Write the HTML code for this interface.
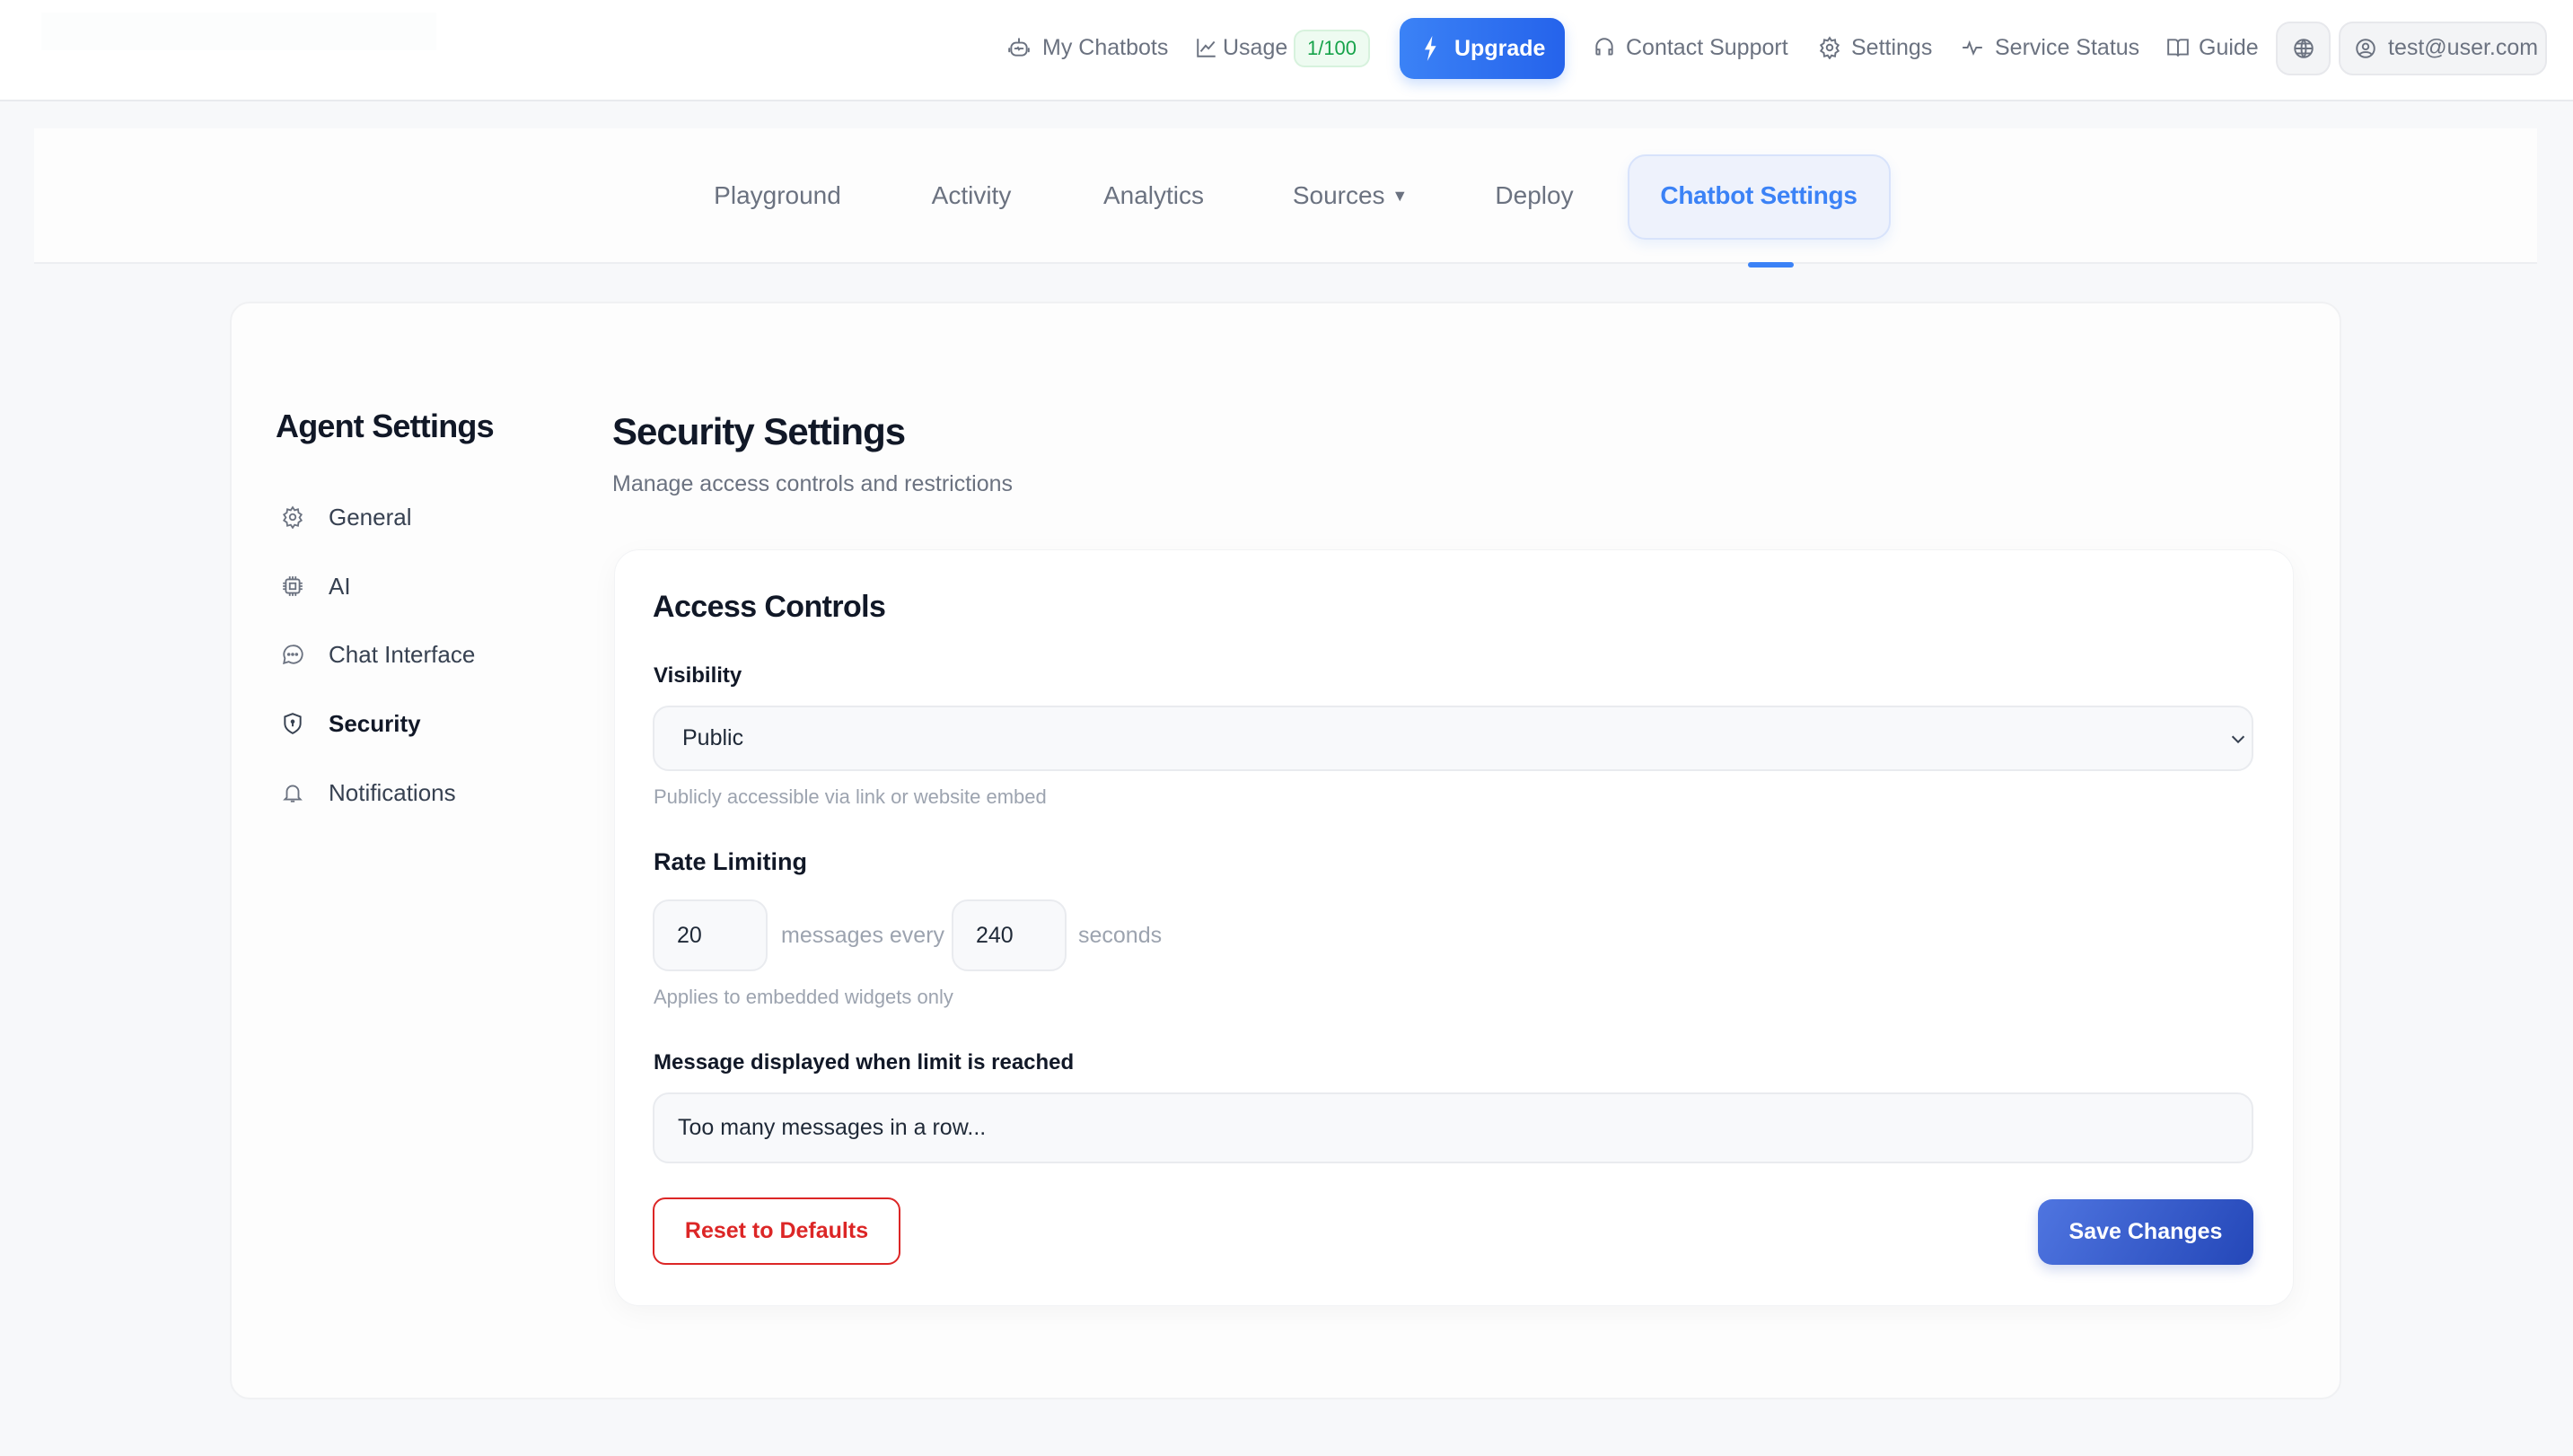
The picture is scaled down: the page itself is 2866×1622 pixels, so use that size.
<!DOCTYPE html>
<html><head><meta charset="utf-8"><style>
*{margin:0;padding:0;box-sizing:border-box}
body{width:2866px;height:1622px;background:#f7f8fa;font-family:"Liberation Sans",sans-serif;position:relative;overflow:hidden;color:#111827}
.a{position:absolute;white-space:nowrap}
.hdr{position:absolute;left:0;top:0;width:2866px;height:113px;background:#fff;border-bottom:2px solid #e8eaee}
.hi{position:absolute;top:36px;height:34px;line-height:34px;font-size:25px;color:#6b7280}
svg{display:block}
.tab{position:absolute;top:198px;height:40px;line-height:40px;font-size:28px;color:#6b7280;transform:translateX(-50%)}
.side{position:absolute;left:366px;font-size:26px;color:#374151;height:36px;line-height:36px}
.sic{position:absolute;left:313px;width:26px;height:26px}
.inp{position:absolute;background:#f8f9fb;border:2px solid #e9ebef;border-radius:18px}
.help{position:absolute;left:728px;font-size:22px;color:#9ca3af;height:30px;line-height:30px}
.lbl{position:absolute;left:728px;font-size:24px;font-weight:bold;color:#111827;height:32px;line-height:32px}
</style></head><body>
<div class="hdr"></div>
<div class="a" style="left:46px;top:14px;width:440px;height:42px;background:#fcfdfd"></div>

<!-- header items -->
<svg class="a" style="left:1122px;top:40px" width="26" height="26" viewBox="0 0 24 24" fill="none" stroke="#6b7280" stroke-width="1.8" stroke-linecap="round"><rect x="4" y="7" width="16" height="13" rx="5"/><path d="M12 3v4M2 13v3M22 13v3M8 13h2l1-1 1 2 1-1h3"/></svg>
<div class="hi" style="left:1161px">My Chatbots</div>
<svg class="a" style="left:1331px;top:40px" width="26" height="26" viewBox="0 0 24 24" fill="none" stroke="#6b7280" stroke-width="1.8"><path d="M3 3v18h18M6 16l5-6 3 3 6-7"/></svg>
<div class="hi" style="left:1362px">Usage</div>
<div class="a" style="left:1441px;top:33px;width:85px;height:42px;border-radius:12px;background:#eefbf1;border:2px solid #d7f2dd;color:#16a34a;font-size:22px;line-height:38px;text-align:center">1/100</div>
<div class="a" style="left:1559px;top:20px;width:184px;height:68px;border-radius:16px;background:linear-gradient(90deg,#3b82f6,#2563eb);box-shadow:0 6px 14px rgba(59,130,246,.25);color:#fff;font-size:25px;font-weight:bold;line-height:68px">
<svg class="a" style="left:26px;top:20px" width="18" height="28" viewBox="0 0 12 20"><path d="M7 0L1 11h4l-2 9 7-12H6z" fill="#fff"/></svg><span style="position:absolute;left:61px">Upgrade</span></div>
<svg class="a" style="left:1774px;top:40px" width="26" height="26" viewBox="0 0 24 24" fill="none" stroke="#6b7280" stroke-width="1.8"><path d="M4 14v-3a8 8 0 0116 0v3M4 14h3v5H5a1 1 0 01-1-1zM20 14h-3v5h2a1 1 0 001-1z"/></svg>
<div class="hi" style="left:1811px">Contact Support</div>
<svg class="a" style="left:2025px;top:40px" width="26" height="26" viewBox="0 0 24 24" fill="none" stroke="#6b7280" stroke-width="1.8"><circle cx="12" cy="12" r="3"/><path d="M12 2l2 3 3.5-1 .5 3.5 3 2-2 3 2 3-3 2-.5 3.5-3.5-1-2 3-2-3-3.5 1-.5-3.5-3-2 2-3-2-3 3-2 .5-3.5 3.5 1z"/></svg>
<div class="hi" style="left:2062px">Settings</div>
<svg class="a" style="left:2184px;top:40px" width="26" height="26" viewBox="0 0 24 24" fill="none" stroke="#6b7280" stroke-width="1.8"><path d="M2 12h5l2-5 4 11 3-6h6"/></svg>
<div class="hi" style="left:2222px">Service Status</div>
<svg class="a" style="left:2413px;top:40px" width="26" height="26" viewBox="0 0 24 24" fill="none" stroke="#6b7280" stroke-width="1.8"><path d="M2 4h7a3 3 0 013 3v14a2 2 0 00-2-2H2zM22 4h-7a3 3 0 00-3 3v14a2 2 0 012-2h8z"/></svg>
<div class="hi" style="left:2449px">Guide</div>
<div class="a" style="left:2535px;top:24px;width:61px;height:60px;border-radius:16px;background:#f3f4f6;border:2px solid #e7e8ec"></div>
<svg class="a" style="left:2553px;top:41px" width="26" height="26" viewBox="0 0 24 24" fill="none" stroke="#6b7280" stroke-width="1.8"><circle cx="12" cy="12" r="9"/><path d="M3 12h18M12 3c3 3 3 15 0 18M12 3c-3 3-3 15 0 18M5 7h14M5 17h14"/></svg>
<div class="a" style="left:2605px;top:24px;width:232px;height:60px;border-radius:16px;background:#f3f4f6;border:2px solid #e7e8ec"></div>
<svg class="a" style="left:2622px;top:41px" width="26" height="26" viewBox="0 0 24 24" fill="none" stroke="#6b7280" stroke-width="1.8"><circle cx="12" cy="12" r="9"/><circle cx="12" cy="10" r="3"/><path d="M6 18c2-3 10-3 12 0"/></svg>
<div class="hi" style="left:2660px">test@user.com</div>

<!-- tab bar -->
<div class="a" style="left:38px;top:143px;width:2788px;height:151px;background:#fdfdfd;border-bottom:2px solid #eceef1"></div>
<div class="tab" style="left:866px">Playground</div>
<div class="tab" style="left:1082px">Activity</div>
<div class="tab" style="left:1285px">Analytics</div>
<div class="tab" style="left:1504px">Sources <span style="font-size:18px;vertical-align:3px">▼</span></div>
<div class="tab" style="left:1709px">Deploy</div>
<div class="a" style="left:1813px;top:172px;width:293px;height:95px;border-radius:20px;background:#eef2fc;border:2px solid #d8e3fb;box-shadow:0 6px 14px rgba(59,130,246,.1)"></div>
<div class="tab" style="left:1959px;color:#3b82f6;font-weight:bold;letter-spacing:-0.3px">Chatbot Settings</div>
<div class="a" style="left:1947px;top:292px;width:51px;height:6px;border-radius:3px;background:#3b82f6"></div>

<!-- main card -->
<div class="a" style="left:256px;top:336px;width:2352px;height:1223px;background:#fdfdfd;border:2px solid #f0f1f3;border-radius:22px"></div>
<div class="a" style="left:307px;top:454px;font-size:36px;font-weight:bold;letter-spacing:-0.8px;color:#111827;line-height:42px">Agent Settings</div>

<svg class="sic" style="top:563px" viewBox="0 0 24 24" fill="none" stroke="#6b7280" stroke-width="1.7"><circle cx="12" cy="12" r="3"/><path d="M12 2l2 3 3.5-1 .5 3.5 3 2-2 3 2 3-3 2-.5 3.5-3.5-1-2 3-2-3-3.5 1-.5-3.5-3-2 2-3-2-3 3-2 .5-3.5 3.5 1z"/></svg>
<div class="side" style="top:558px">General</div>
<svg class="sic" style="top:640px" viewBox="0 0 24 24" fill="none" stroke="#6b7280" stroke-width="1.7"><rect x="5" y="5" width="14" height="14" rx="2"/><rect x="9" y="9" width="6" height="6"/><path d="M9 2v3M12 2v3M15 2v3M9 19v3M12 19v3M15 19v3M2 9h3M2 12h3M2 15h3M19 9h3M19 12h3M19 15h3"/></svg>
<div class="side" style="top:635px">AI</div>
<svg class="sic" style="top:716px" viewBox="0 0 24 24" fill="none" stroke="#6b7280" stroke-width="1.7"><path d="M12 3a9 9 0 00-8 13l-1 5 5-1.5A9 9 0 1012 3z"/><circle cx="8" cy="12" r=".8" fill="#6b7280"/><circle cx="12" cy="12" r=".8" fill="#6b7280"/><circle cx="16" cy="12" r=".8" fill="#6b7280"/></svg>
<div class="side" style="top:711px">Chat Interface</div>
<svg class="sic" style="top:793px" viewBox="0 0 24 24" fill="none" stroke="#374151" stroke-width="1.8"><path d="M12 2l8 3v7c0 5-4 8-8 10-4-2-8-5-8-10V5z"/><circle cx="12" cy="10" r="1.2" fill="#374151"/><path d="M12 11v4"/></svg>
<div class="side" style="top:788px;color:#111827;font-weight:bold">Security</div>
<svg class="sic" style="top:870px" viewBox="0 0 24 24" fill="none" stroke="#6b7280" stroke-width="1.7"><path d="M6 17V11a6 6 0 0112 0v6l2 2H4zM10 21h4"/></svg>
<div class="side" style="top:865px">Notifications</div>

<div class="a" style="left:682px;top:456px;font-size:42px;font-weight:bold;letter-spacing:-1px;color:#111827;line-height:50px">Security Settings</div>
<div class="a" style="left:682px;top:524px;font-size:25px;color:#6b7280;line-height:30px">Manage access controls and restrictions</div>

<!-- inner card -->
<div class="a" style="left:684px;top:612px;width:1871px;height:843px;background:#fff;border-radius:28px;border:1px solid #f2f3f5;box-shadow:0 8px 30px rgba(0,0,0,.04)"></div>
<div class="a" style="left:727px;top:656px;font-size:34px;font-weight:bold;letter-spacing:-0.6px;line-height:40px">Access Controls</div>
<div class="lbl" style="top:737px">Visibility</div>
<div class="inp" style="left:727px;top:786px;width:1783px;height:73px"></div>
<div class="a" style="left:760px;top:806px;font-size:25px;line-height:32px;color:#1f2937">Public</div>
<svg class="a" style="left:2482px;top:812px" width="22" height="22" viewBox="0 0 24 24" fill="none" stroke="#374151" stroke-width="2.2"><path d="M5 9l7 7 7-7"/></svg>
<div class="help" style="top:873px">Publicly accessible via link or website embed</div>
<div class="a" style="left:728px;top:943px;font-size:27px;font-weight:bold;line-height:34px">Rate Limiting</div>
<div class="inp" style="left:727px;top:1002px;width:128px;height:80px"></div>
<div class="a" style="left:754px;top:1026px;font-size:25px;line-height:32px;color:#1f2937">20</div>
<div class="a" style="left:870px;top:1026px;font-size:25px;line-height:32px;color:#9ca3af">messages every</div>
<div class="inp" style="left:1060px;top:1002px;width:128px;height:80px"></div>
<div class="a" style="left:1087px;top:1026px;font-size:25px;line-height:32px;color:#1f2937">240</div>
<div class="a" style="left:1201px;top:1026px;font-size:25px;line-height:32px;color:#9ca3af">seconds</div>
<div class="help" style="top:1096px">Applies to embedded widgets only</div>
<div class="lbl" style="top:1168px">Message displayed when limit is reached</div>
<div class="inp" style="left:727px;top:1217px;width:1783px;height:79px"></div>
<div class="a" style="left:755px;top:1240px;font-size:25px;line-height:32px;color:#1f2937">Too many messages in a row...</div>
<div class="a" style="left:727px;top:1334px;width:276px;height:75px;border:2px solid #dc2626;border-radius:14px;background:#fff;color:#dc2626;font-size:25px;font-weight:bold;text-align:center;line-height:71px">Reset to Defaults</div>
<div class="a" style="left:2270px;top:1336px;width:240px;height:73px;border-radius:16px;background:linear-gradient(120deg,#4f75e0,#2447b8);color:#fff;font-size:25px;font-weight:bold;text-align:center;line-height:73px;box-shadow:0 6px 14px rgba(37,71,184,.2)">Save Changes</div>
</body></html>
